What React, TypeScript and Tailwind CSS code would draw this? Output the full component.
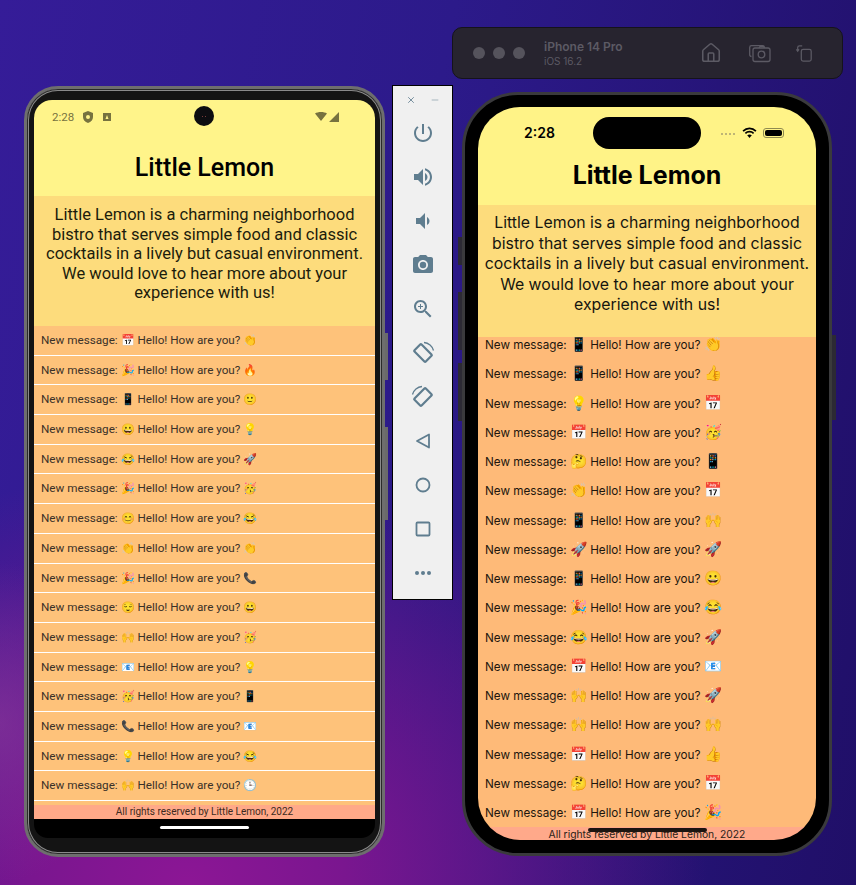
import { House, Minus, X } from "lucide-react";

const androidRows = [
  ["📅", "👏"], ["🎉", "🔥"], ["📱", "🙂"], ["😀", "💡"], ["😂", "🚀"], ["🎉", "🥳"], ["😊", "😂"], ["👏", "👏"],
  ["🎉", "📞"], ["😌", "😀"], ["🙌", "🥳"], ["📧", "💡"], ["🥳", "📱"], ["📞", "📧"], ["💡", "😂"], ["🙌", "🕒"],
];

const iosRows = [
  ["📱", "👏"], ["📱", "👍"], ["💡", "📅"], ["📅", "🥳"], ["🤔", "📱"], ["👏", "📅"], ["📱", "🙌"], ["🚀", "🚀"],
  ["📱", "😀"], ["🎉", "😂"], ["😂", "🚀"], ["📅", "📧"], ["🙌", "🚀"], ["🙌", "🙌"], ["📅", "👍"], ["🤔", "📅"], ["📅", "🎉"],
];

const blurb = "Little Lemon is a charming neighborhood bistro that serves simple food and classic cocktails in a lively but casual environment. We would love to hear more about your experience with us!";

function AndroidPhone() {
  return (
    <div className="absolute left-[24px] top-[86px] w-[361px] h-[771px] rounded-[34px] bg-[#141414] border-[3px] border-[#6e6e6e] shadow-[inset_0_0_0_1px_#2a2a2a,inset_0_0_0_2px_#8a8a8a] px-[7px] pt-[11px] pb-[16px]">
      <div className="flex flex-col h-full rounded-t-[18px] rounded-b-[14px] overflow-hidden bg-black font-['Roboto',sans-serif]">
        <div className="relative h-[96px] shrink-0 bg-[#fff48a] flex flex-col items-center">
          <div className="absolute left-[18px] top-[10px] flex items-center gap-[9px] text-[11.500px] leading-[14px] text-[#77723f]">
            <span>2:28</span>
            <svg width="10" height="12" viewBox="0 0 10 12" className="fill-[#77723f]"><path d="M5 0l5 2v4c0 3-2 5-5 6-3-1-5-3-5-6V2zm0 4a2 2 0 100 4 2 2 0 000-4z" /></svg>
            <svg width="8" height="8" viewBox="0 0 8 8" className="fill-[#77723f] ml-[1px]"><path d="M0 0h8v8H0zM4 2L2.500 6h3z" /></svg>
          </div>
          <div className="absolute left-[160px] top-[6px] w-[20px] h-[20px] rounded-full bg-[#0d0d10] flex items-center justify-center gap-[2px]">
            <span className="w-[1px] h-[1px] bg-[#7a3a3a]" />
            <span className="w-[1px] h-[1px] bg-[#7a3a3a]" />
          </div>
          <svg width="24" height="10" viewBox="0 0 24 10" className="absolute right-[36px] top-[12px] fill-[#77723f]"><path d="M0 1.500C3-.5 9-.5 12 1.500L6 9zM14 10L24 0v10z" /></svg>
          <h1 className="mt-[50px] text-[25px] leading-[36px] font-medium text-black">Little Lemon</h1>
        </div>
        <p className="h-[130px] shrink-0 bg-[#fddc7c] px-[4px] pt-[9px] text-center text-[16.500px] leading-[19.500px] text-[#1c1c0c]">{blurb}</p>
        <div className="h-[479px] shrink-0 bg-[#fec27a] flex flex-col">
          {androidRows.map(([a, b], i) => (
            <div key={i} className="h-[29.700px] shrink-0 pl-[7px] border-b border-white text-[11.700px] leading-[28.700px] text-[#3a3128] whitespace-pre">
              New message: <span className="text-[11.200px] leading-none">{a}</span> Hello! How are you? <span className="text-[11.200px] leading-none">{b}</span>
            </div>
          ))}
        </div>
        <div className="h-[14px] shrink-0 bg-[#ffa988] text-center text-[10px] leading-[14px] text-[#3d2a20]">All rights reserved by Little Lemon, 2022</div>
        <div className="flex-1 flex items-center justify-center">
          <div className="w-[89px] h-[3px] rounded-full bg-white mb-[3px]" />
        </div>
      </div>
      <div className="absolute right-[-6px] top-[244px] w-[3px] h-[47px] bg-[#6a6a6a]" />
      <div className="absolute right-[-6px] top-[338px] w-[3px] h-[93px] bg-[#6a6a6a]" />
    </div>
  );
}

function Toolbar() {
  const cls = "w-[24px] h-[24px] fill-[#5f7d8f]";
  return (
    <div className="absolute left-[392px] top-[85px] w-[61px] h-[515px] bg-[#f0f0f0] border border-black flex flex-col items-center">
      <div className="flex items-center gap-[14px] h-[26px] mt-[1px] text-[#5f7d8f]">
        <X className="w-[10px] h-[10px]" />
        <Minus className="w-[10px] h-[10px] opacity-60" />
      </div>
      <div className="flex flex-col items-center gap-[20px] mt-[8px]">
        <svg viewBox="0 0 24 24" className={cls}><path d="M13 3h-2v10h2V3zm4.830 2.170l-1.420 1.420C17.990 7.860 19 9.810 19 12c0 3.870-3.130 7-7 7s-7-3.130-7-7c0-2.190 1.010-4.140 2.580-5.420L6.170 5.170C4.230 6.820 3 9.260 3 12c0 4.970 4.030 9 9 9s9-4.030 9-9c0-2.740-1.230-5.180-3.170-6.830z" /></svg>
        <svg viewBox="0 0 24 24" className={cls}><path d="M3 9v6h4l5 5V4L7 9H3zm13.500 3c0-1.770-1.020-3.290-2.500-4.030v8.050c1.480-.73 2.500-2.250 2.500-4.020zM14 3.230v2.060c2.890.86 5 3.540 5 6.710s-2.110 5.850-5 6.710v2.060c4.010-.91 7-4.490 7-8.770s-2.990-7.860-7-8.770z" /></svg>
        <svg viewBox="0 0 24 24" className={cls}><path d="M18.500 12c0-1.770-1.020-3.290-2.500-4.030v8.050c1.480-.73 2.500-2.250 2.500-4.020zM5 9v6h4l5 5V4L9 9H5z" /></svg>
        <svg viewBox="0 0 24 24" className={cls}><circle cx="12" cy="12" r="3.200" /><path d="M9 2L7.170 4H4c-1.100 0-2 .9-2 2v12c0 1.100.9 2 2 2h16c1.100 0 2-.9 2-2V6c0-1.100-.9-2-2-2h-3.170L15 2H9zm3 15c-2.760 0-5-2.240-5-5s2.240-5 5-5 5 2.240 5 5-2.240 5-5 5z" /></svg>
        <svg viewBox="0 0 24 24" className={cls}><path d="M15.500 14h-.79l-.28-.27C15.410 12.590 16 11.110 16 9.500 16 5.910 13.090 3 9.500 3S3 5.910 3 9.500 5.910 16 9.500 16c1.610 0 3.090-.59 4.230-1.570l.27.28v.79l5 4.990L20.490 19l-4.990-5zm-6 0C7.010 14 5 11.990 5 9.500S7.010 5 9.500 5 14 7.010 14 9.500 11.990 14 9.500 14z" /><path d="M12 10h-2v2H9v-2H7V9h2V7h1v2h2v1z" /></svg>
        <svg viewBox="0 0 24 24" className="w-[24px] h-[24px] text-[#5f7d8f]" fill="none" stroke="currentColor" strokeWidth="2.200"><rect x="7" y="4" width="10" height="16" rx="1" transform="rotate(-45 12 12)" /><path d="M13 1.500c4.500.2 8.500 3.500 9.500 8" strokeWidth="1.300" /></svg>
        <svg viewBox="0 0 24 24" className="w-[24px] h-[24px] text-[#5f7d8f]" fill="none" stroke="currentColor" strokeWidth="2.200"><rect x="7" y="4" width="10" height="16" rx="1" transform="rotate(45 12 12)" /><path d="M11 1.500C6.500 1.700 2.500 5 1.500 9.500" strokeWidth="1.300" /></svg>
        <svg viewBox="0 0 24 24" className="w-[24px] h-[24px] text-[#5f7d8f]" fill="none" stroke="currentColor" strokeWidth="1.800"><path d="M18 5.500v13L6 12z" strokeLinejoin="round" /></svg>
        <svg viewBox="0 0 24 24" className="w-[24px] h-[24px] text-[#5f7d8f]" fill="none" stroke="currentColor" strokeWidth="1.800"><circle cx="12" cy="12" r="6.500" /></svg>
        <svg viewBox="0 0 24 24" className="w-[24px] h-[24px] text-[#5f7d8f]" fill="none" stroke="currentColor" strokeWidth="1.800"><rect x="5.500" y="5.500" width="13" height="13" rx="1" /></svg>
        <svg viewBox="0 0 24 24" className={cls}><circle cx="6" cy="12" r="2" /><circle cx="12" cy="12" r="2" /><circle cx="18" cy="12" r="2" /></svg>
      </div>
    </div>
  );
}

function SimulatorBar() {
  return (
    <div className="absolute left-[452px] top-[27px] w-[391px] h-[52px] rounded-[10px] bg-[#27242f] border border-[#15131b] flex items-center text-[#5c5a64] font-['Inter',sans-serif]">
      <div className="flex gap-[8px] ml-[20px]">
        <span className="w-[12px] h-[12px] rounded-full bg-[#55535c]" />
        <span className="w-[12px] h-[12px] rounded-full bg-[#55535c]" />
        <span className="w-[12px] h-[12px] rounded-full bg-[#55535c]" />
      </div>
      <div className="ml-[19px] flex flex-col">
        <span className="text-[12px] leading-[15px] font-semibold">iPhone 14 Pro</span>
        <span className="text-[10px] leading-[13px] mt-[1px]">iOS 16.2</span>
      </div>
      <House className="ml-[77px] w-[22px] h-[22px]" strokeWidth={1.700} />
      <svg viewBox="0 0 22 20" className="ml-[27px] w-[22px] h-[20px]" fill="none" stroke="currentColor" strokeWidth="1.300"><path d="M2.500 13.500c-1 0-1.800-.7-1.800-1.800V4.500c0-1 .8-1.800 1.800-1.800h11c1 0 1.800.5 1.800 1.300" /><rect x="4" y="5" width="17" height="13.500" rx="2" /><path d="M10 5l1-1.500h3.500L15.500 5" /><circle cx="12.500" cy="11.500" r="3.300" /></svg>
      <svg viewBox="0 0 20 20" className="ml-[24px] w-[18px] h-[18px]" fill="none" stroke="currentColor" strokeWidth="1.400"><rect x="7" y="6" width="11" height="13" rx="2" /><path d="M3 8V4a2 2 0 012-2h3M1.500 6L3 8l1.500-2" /></svg>
    </div>
  );
}

function IPhone() {
  return (
    <div className="absolute left-[462px] top-[92px] w-[370px] h-[764px] rounded-[56px] bg-black border-[3px] border-[#3a3a3c] px-[13px] pt-[12px] pb-[13px]">
      <div className="relative flex flex-col h-full rounded-[42px] overflow-hidden font-['Inter',sans-serif]">
        <div className="relative h-[98px] shrink-0 bg-[#fff387] flex flex-col items-center">
          <span className="absolute left-[46px] top-[17px] text-[14px] leading-[18px] font-semibold text-black">2:28</span>
          <div className="absolute left-[115px] top-[10px] w-[108px] h-[32px] rounded-full bg-black" />
          <div className="absolute left-[243px] top-[20px] h-[11px] flex items-center">
            <div className="flex gap-[2px] mt-[3px]">
              <span className="w-[2px] h-[2px] rounded-full bg-[#a8a070]" />
              <span className="w-[2px] h-[2px] rounded-full bg-[#a8a070]" />
              <span className="w-[2px] h-[2px] rounded-full bg-[#a8a070]" />
              <span className="w-[2px] h-[2px] rounded-full bg-[#a8a070]" />
            </div>
            <svg width="15" height="11" viewBox="0 0 16 12" fill="none" stroke="black" strokeWidth="1.800" className="ml-[7px]"><path d="M1 4.500c4-4 10-4 14 0M3.500 7c2.500-2.500 6.500-2.500 9 0" /><path d="M8 12l-2.500-3c1.500-1 3.500-1 5 0z" fill="black" stroke="none" /></svg>
            <div className="ml-[6px] w-[21px] h-[10px] rounded-[3px] border border-[#8f8a50] p-[1px]"><div className="h-full rounded-[2px] bg-black" /></div>
          </div>
          <h1 className="mt-[50px] text-[25px] leading-[36px] font-bold text-black">Little Lemon</h1>
        </div>
        <p className="h-[132px] shrink-0 bg-[#fddc7c] px-[4px] pt-[8px] text-center text-[15.850px] leading-[20.500px] text-[#15150f]">{blurb}</p>
        <div className="h-[490px] shrink-0 bg-[#feba78] overflow-hidden">
          <div className="-mt-[6px]">
            {iosRows.map(([a, b], i) => (
              <div key={i} className="h-[29.250px] pl-[7px] text-[11.700px] leading-[29.250px] text-[#1d160e] whitespace-pre">
                New message: <span className="text-[14px] leading-none">{a}</span> Hello! How are you? <span className="text-[14.500px] leading-none">{b}</span>
              </div>
            ))}
          </div>
        </div>
        <div className="flex-1 bg-[#ffa98a] text-center text-[10.300px] leading-[13px] pt-[1px] text-[#2a1d17]">All rights reserved by Little Lemon, 2022</div>
        <div className="absolute left-[110px] bottom-[8px] w-[119px] h-[4px] rounded-full bg-[#1c1410]" />
      </div>
      <div className="absolute left-[-7px] top-[142px] w-[4px] h-[28px] bg-[#2c2a34]" />
      <div className="absolute left-[-7px] top-[197px] w-[4px] h-[58px] bg-[#2c2a34]" />
      <div className="absolute left-[-7px] top-[268px] w-[4px] h-[58px] bg-[#2c2a34]" />
      <div className="absolute right-[-7px] top-[240px] w-[4px] h-[85px] bg-[#2c2a34]" />
    </div>
  );
}

export default function App() {
  return (
    <div className="relative w-[856px] h-[885px] overflow-hidden bg-[linear-gradient(100deg,#351c98_0%,#2c1a8a_45%,#200f68_100%)]">
      <div className="absolute left-0 bottom-0 w-[856px] h-[885px] bg-[radial-gradient(ellipse_520px_420px_at_22%_100%,#8c1695_0%,#7a168f_30%,#8c169500_100%)]" />
      <div className="absolute left-0 top-[560px] w-[120px] h-[325px] bg-[radial-gradient(ellipse_120px_160px_at_0%_50%,#8a3a9a99_0%,#8a3a9a00_100%)]" />
      <AndroidPhone />
      <Toolbar />
      <SimulatorBar />
      <IPhone />
    </div>
  );
}
